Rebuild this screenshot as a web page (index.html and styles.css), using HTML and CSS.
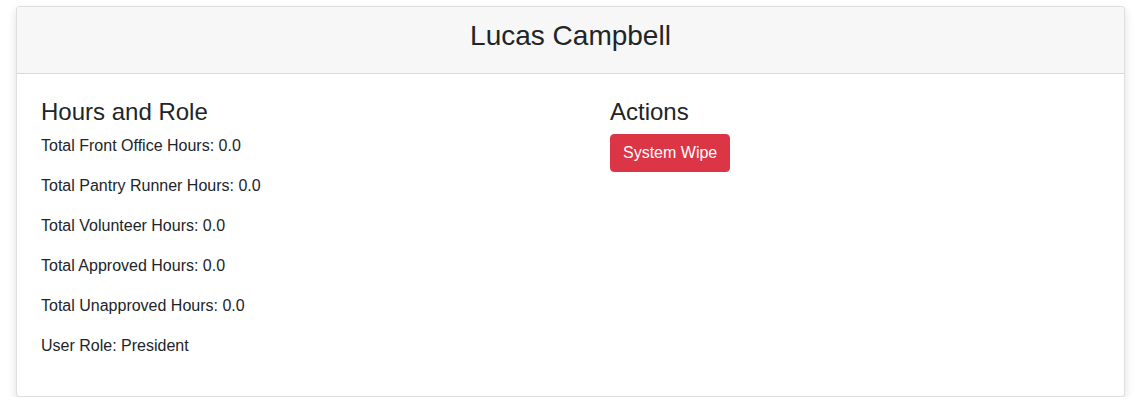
FILE: index.html
```html
<!DOCTYPE html>
<html lang="en">
<head>
<meta charset="utf-8">
<title>Lucas Campbell</title>
<link rel="stylesheet" href="styles.css">
</head>
<body>
<div class="card">
  <div class="card-header">
    <h3 class="title">Lucas Campbell</h3>
  </div>
  <div class="card-body">
    <section class="col">
      <h4 class="heading">Hours and Role</h4>
      <p>Total Front Office Hours: 0.0</p>
      <p>Total Pantry Runner Hours: 0.0</p>
      <p>Total Volunteer Hours: 0.0</p>
      <p>Total Approved Hours: 0.0</p>
      <p>Total Unapproved Hours: 0.0</p>
      <p>User Role: President</p>
    </section>
    <section class="col">
      <h4 class="heading">Actions</h4>
      <button class="btn-danger" type="button">System Wipe</button>
    </section>
  </div>
</div>
</body>
</html>
```

FILE: styles.css
```css
* { box-sizing: border-box; }
html, body { margin: 0; padding: 0; background: #fff; }
body {
  font-family: "Liberation Sans", Arial, Helvetica, sans-serif;
  font-size: 16px;
  line-height: 1.5;
  color: #212529;
  padding: 6px 13px 0 16px;
}
.card {
  border: 1px solid rgba(0,0,0,.125);
  border-radius: 4px;
  background: #fff;
  box-shadow: 0 4px 10px rgba(0,0,0,.13);
  overflow: hidden;
}
.card-header {
  background: #f7f7f7;
  border-bottom: 1px solid rgba(0,0,0,.125);
  padding: 12px 20px;
  text-align: center;
}
.title {
  margin: 0 0 8px;
  font-size: 28px;
  font-weight: 400;
  line-height: 1.2;
}
.card-body {
  padding: 24px 24px 22px 24px;
  display: grid;
  grid-template-columns: 569px 1fr;
}
.heading {
  margin: 0 0 8px;
  font-size: 24px;
  font-weight: 400;
  line-height: 1.2;
}
p { margin: 0 0 16px; }
.btn-danger {
  font-family: inherit;
  font-size: 16px;
  line-height: 1.5;
  color: #fff;
  background: #dc3545;
  border: 1px solid #dc3545;
  border-radius: 4px;
  padding: 6px 12px;
  cursor: pointer;
}
```
